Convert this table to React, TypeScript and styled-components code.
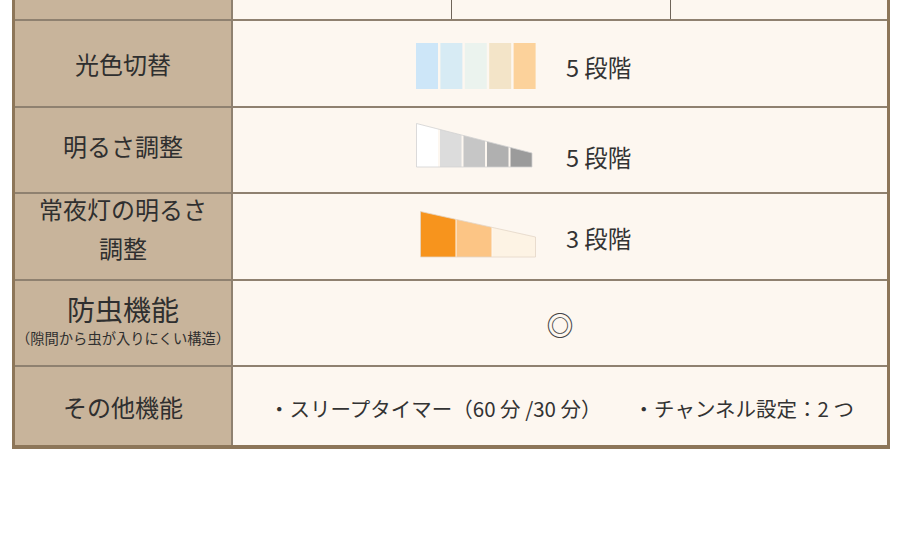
import styled, { createGlobalStyle } from "styled-components";

const GlobalStyle = createGlobalStyle`
  html, body {
    margin: 0;
    padding: 0;
    background: #ffffff;
  }
  body {
    font-family: "Noto Sans CJK JP", "Noto Sans", sans-serif;
    color: #333333;
  }
`;

const Page = styled.div`
  width: 922px;
  height: 553px;
  padding-left: 12px;
  box-sizing: border-box;
`;

const StyledTable = styled.div`
  width: 878px;
  box-sizing: border-box;
  border-left: 3px solid #8d7659;
  border-right: 3px solid #8d7659;
  border-bottom: 4px solid #8d7659;
`;

const Row = styled.div<{ h: number; first?: boolean }>`
  display: grid;
  grid-template-columns: 218px 1fr;
  grid-template-rows: ${(p) => p.h}px;
  overflow: hidden;
  border-top: ${(p) => (p.first ? "none" : "2px solid #8f8170")};
`;

const Label = styled.div`
  background: #c8b49b;
  border-right: 2px solid #8f8170;
  display: flex;
  align-items: center;
  justify-content: center;
  text-align: center;
  font-size: 24px;
  line-height: 39px;
  color: #2f2f2f;
`;

const Shift = styled.div<{ n: number }>`
  display: flex;
  flex-direction: column;
  align-items: center;
  transform: translateY(${(p) => p.n}px);
`;

const BigLabel = styled.span`
  font-size: 28px;
  line-height: 36px;
`;

const Note = styled.span`
  font-size: 14.3px;
  line-height: 22px;
`;

const Value = styled.div<{ center?: boolean; pad?: number }>`
  background: #fdf7f0;
  display: flex;
  align-items: center;
  justify-content: ${(p) => (p.center ? "center" : "flex-start")};
  padding-left: ${(p) => p.pad ?? 0}px;
`;

const SplitValue = styled.div`
  background: #fdf7f0;
  display: grid;
  grid-template-columns: 218px 219px 1fr;
`;

const SplitCell = styled.div`
  & + & {
    border-left: 1px solid #6f655a;
  }
`;

const Graphic = styled.div`
  width: 150px;
  display: flex;
`;

const Steps = styled.span`
  font-size: 23.5px;
  line-height: 30px;
  color: #333333;
`;

const Mark = styled.span`
  font-size: 27px;
  line-height: 30px;
  color: #444444;
`;

const Features = styled.div`
  display: flex;
  gap: 32px;
  font-size: 20.5px;
  line-height: 28px;
  color: #333333;
  white-space: nowrap;
`;

const swatches = ["#cde6f8", "#d7ebf4", "#ebf3ee", "#f3e4c8", "#fcd29b"];

const ColorSwatch = () => (
  <svg width="120" height="46" viewBox="0 0 120 46">
    {swatches.map((c, i) => (
      <rect key={c} x={i * 24.4} y={0} width={22} height={46} fill={c} />
    ))}
  </svg>
);

const greys = ["#ffffff", "#dcdcdc", "#c6c6c6", "#b0b0b0", "#9b9b9b"];

// top edge falls from y0 at the left to y1 at the right
const Ramp = ({
  colors,
  widths,
  gap,
  x0,
  y0,
  y1,
  bottom,
  outline,
}: {
  colors: string[];
  widths: number[];
  gap: number;
  x0: number;
  y0: number;
  y1: number;
  bottom: number;
  outline: string;
}) => {
  const total =
    widths.reduce((s, w) => s + w, 0) + (widths.length - 1) * gap;
  const top = (x: number) => y0 + ((y1 - y0) * (x - x0)) / total;
  let a = x0;
  return (
    <svg width="122" height={bottom + 2} viewBox={`0 0 122 ${bottom + 2}`}>
      {colors.map((c, i) => {
        const start = a;
        const b = start + widths[i];
        a = b + gap;
        return (
          <polygon
            key={i}
            points={`${start},${top(start)} ${b},${top(b)} ${b},${bottom} ${start},${bottom}`}
            fill={c}
          />
        );
      })}
      <polygon
        points={`${x0},${y0} ${x0 + total},${y1} ${x0 + total},${bottom} ${x0},${bottom}`}
        fill="none"
        stroke={outline}
        strokeWidth="0.8"
      />
    </svg>
  );
};

export default function App() {
  return (
    <Page>
      <GlobalStyle />
      <StyledTable>
        <Row h={19} first>
          <Label />
          <SplitValue>
            <SplitCell />
            <SplitCell />
            <SplitCell />
          </SplitValue>
        </Row>

        <Row h={85}>
          <Label>光色切替</Label>
          <Value pad={183}>
            <Shift n={2}>
              <Graphic>
                <ColorSwatch />
              </Graphic>
            </Shift>
            <Shift n={3}>
              <Steps>5 段階</Steps>
            </Shift>
          </Value>
        </Row>

        <Row h={84}>
          <Label>
            <Shift n={-5}>明るさ調整</Shift>
          </Label>
          <Value pad={183}>
            <Shift n={-4}>
              <Graphic>
                <Ramp
                  colors={greys}
                  widths={[21.5, 21.5, 21.5, 21.5, 21.5]}
                  gap={2}
                  x0={0.5}
                  y0={0.5}
                  y1={30}
                  bottom={44}
                  outline="#d2d2d2"
                />
              </Graphic>
            </Shift>
            <Shift n={7}>
              <Steps>5 段階</Steps>
            </Shift>
          </Value>
        </Row>

        <Row h={85}>
          <Label>
            <Shift n={-9}>
              <span>常夜灯の明るさ</span>
              <span>調整</span>
            </Shift>
          </Label>
          <Value pad={183}>
            <Shift n={-2}>
              <Graphic>
                <Ramp
                  colors={["#f7941d", "#fcc585", "#fdf3e4"]}
                  widths={[35, 35, 43]}
                  gap={1}
                  x0={4.5}
                  y0={0.5}
                  y1={26}
                  bottom={46}
                  outline="#e3d6c6"
                />
              </Graphic>
            </Shift>
            <Shift n={1}>
              <Steps>3 段階</Steps>
            </Shift>
          </Value>
        </Row>

        <Row h={84}>
          <Label>
            <Shift n={-3}>
              <BigLabel>防虫機能</BigLabel>
              <Note>（隙間から虫が入りにくい構造）</Note>
            </Shift>
          </Label>
          <Value center>
            <Shift n={2}>
              <Mark>◎</Mark>
            </Shift>
          </Value>
        </Row>

        <Row h={78}>
          <Label>その他機能</Label>
          <Value pad={36}>
            <Shift n={2}>
              <Features>
                <span>・スリープタイマー（60 分 /30 分）</span>
                <span>・チャンネル設定：2 つ</span>
              </Features>
            </Shift>
          </Value>
        </Row>
      </StyledTable>
    </Page>
  );
}
